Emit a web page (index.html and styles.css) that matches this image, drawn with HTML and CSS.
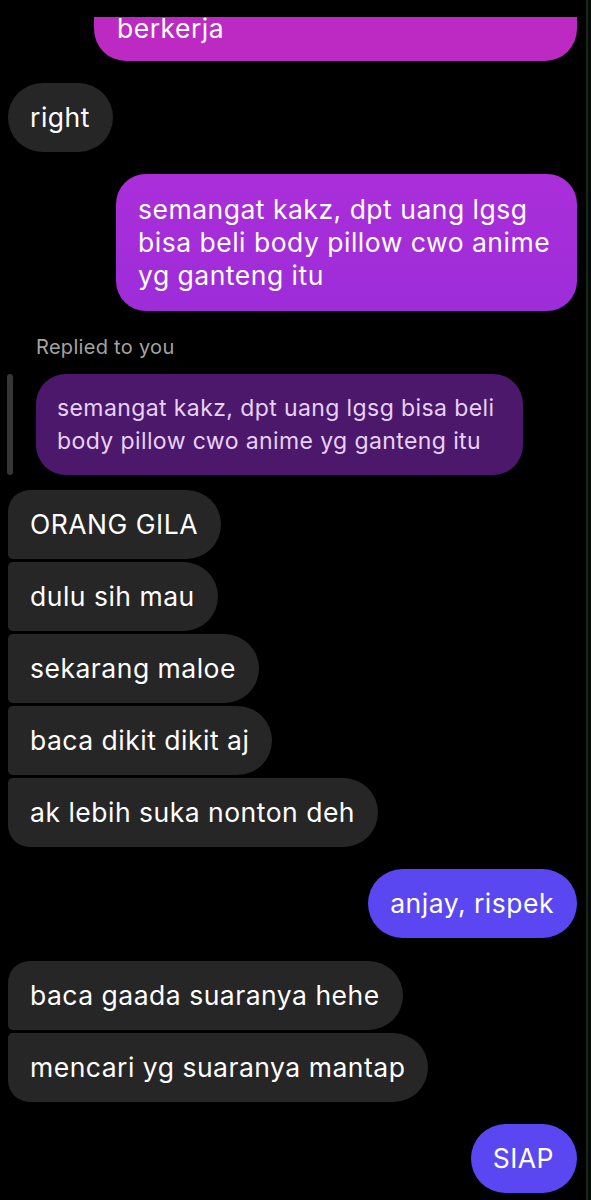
FILE: index.html
```html
<!DOCTYPE html>
<html lang="en">
<head>
    <meta charset="UTF-8">
    <meta name="viewport" content="width=device-width, initial-scale=1.0">
    <title>Chat</title>
    <link rel="stylesheet" href="styles.css">
</head>
<body>
    <div class="screen">
        <section class="thread">
            <div class="row sent">
                <div class="bubble sent-bubble cut">berkerja</div>
            </div>

            <div class="row received gap-big">
                <div class="bubble">right</div>
            </div>

            <div class="row sent gap-big">
                <div class="bubble sent-bubble pink">semangat kakz, dpt uang lgsg bisa beli body pillow cwo anime yg ganteng itu</div>
            </div>

            <div class="reply-label">Replied to you</div>
            <div class="reply">
                <div class="reply-bar"></div>
                <div class="reply-bubble">semangat kakz, dpt uang lgsg bisa beli body pillow cwo anime yg ganteng itu</div>
            </div>

            <div class="group">
                <div class="bubble first">ORANG GILA</div>
                <div class="bubble middle">dulu sih mau</div>
                <div class="bubble middle">sekarang maloe</div>
                <div class="bubble middle">baca dikit dikit aj</div>
                <div class="bubble last">ak lebih suka nonton deh</div>
            </div>

            <div class="row sent gap-big">
                <div class="bubble sent-bubble violet">anjay, rispek</div>
            </div>

            <div class="group gap-big">
                <div class="bubble first">baca gaada suaranya hehe</div>
                <div class="bubble last">mencari yg suaranya mantap</div>
            </div>

            <div class="row sent gap-big">
                <div class="bubble sent-bubble violet">SIAP</div>
            </div>
        </section>
        <div class="scrollbar"></div>
    </div>
</body>
</html>
```

FILE: styles.css
```css
body {
    margin: 0;
    padding: 0;
    background-color: #000;
    font-family: Inter, "Noto Sans", sans-serif;
    color: #fff;
}

.screen {
    display: flex;
    width: 591px;
    height: 1200px;
    overflow: hidden;
}

.thread {
    flex: 1;
    display: flex;
    flex-direction: column;
    padding-top: 17px;
}

.scrollbar {
    width: 3px;
    border-left: 2px solid #16261a;
    background-color: #050a06;
}

.row {
    display: flex;
}

.received {
    justify-content: flex-start;
    padding-left: 8px;
}

.sent {
    justify-content: flex-end;
    padding-right: 9px;
}

.gap-big {
    margin-top: 22px;
}

.bubble {
    background-color: #262626;
    font-size: 26.5px;
    letter-spacing: 0.5px;
    line-height: 33px;
    padding: 18px 23px 18px 22px;
    border-radius: 35px;
    max-width: 416px;
}

.cut {
    width: 483px;
    max-width: none;
    height: 44px;
    padding: 0 23px;
    line-height: 22px;
    background: #bd29c3;
    border-radius: 0 0 32px 32px;
    box-sizing: border-box;
}

.pink {
    background: linear-gradient(180deg, #aa2fd9 0%, #9d2cd9 100%);
    padding-top: 19px;
    padding-bottom: 19px;
    border-radius: 30px;
}

.violet {
    background-color: #5a47f1;
}

.reply-label {
    margin-top: 22px;
    padding-left: 36px;
    font-size: 20px;
    letter-spacing: 0.3px;
    line-height: 28px;
    color: #a3a3a3;
}

.reply {
    display: flex;
    align-items: stretch;
    margin-top: 13px;
    padding-left: 7px;
}

.reply-bar {
    width: 6px;
    border-radius: 3px;
    background-color: #363636;
    margin-right: 23px;
}

.reply-bubble {
    background-color: #4b186c;
    color: #e8d2f4;
    font-size: 23px;
    letter-spacing: 0.4px;
    line-height: 33px;
    padding: 18px 24px 17px 21px;
    border-radius: 30px;
    max-width: 442px;
}

.group {
    display: flex;
    flex-direction: column;
    align-items: flex-start;
    gap: 3px;
    padding-left: 8px;
    margin-top: 15px;
}

.group.gap-big {
    margin-top: 23px;
}

.group .first {
    border-radius: 22px 35px 35px 5px;
}

.group .middle {
    border-radius: 5px 35px 35px 5px;
}

.group .last {
    border-radius: 5px 35px 35px 22px;
}
```
